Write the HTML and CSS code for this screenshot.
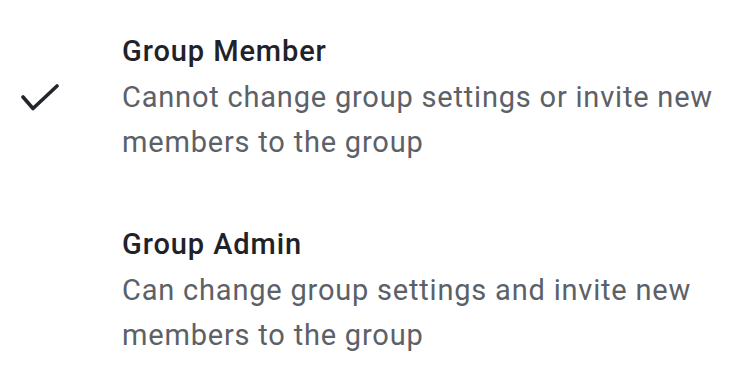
FILE: index.html
```html
<!DOCTYPE html>
<html>
<head>
<meta charset="utf-8">
<link rel="stylesheet" href="styles.css">
</head>
<body>
<div class="list">
  <div class="option">
    <div class="check">
      <svg width="40" height="30" viewBox="0 0 40 30"><path d="M3 13 L13 24.5 L37 2" fill="none" stroke="#22262b" stroke-width="3.6" stroke-linecap="round" stroke-linejoin="round"/></svg>
    </div>
    <div class="text">
      <div class="title">Group Member</div>
      <div class="desc">Cannot change group settings or invite new members to the group</div>
    </div>
  </div>
  <div class="option">
    <div class="check"></div>
    <div class="text">
      <div class="title">Group Admin</div>
      <div class="desc">Can change group settings and invite new members to the group</div>
    </div>
  </div>
</div>
</body>
</html>
```
FILE: styles.css
```css
html, body {
  margin: 0;
  padding: 0;
  background: #ffffff;
}
body {
  font-family: Roboto, "Noto Sans", sans-serif;
}
.list {
  display: flex;
  flex-direction: column;
  gap: 56px;
  padding: 28px 0 0 0;
}
.option {
  display: flex;
  align-items: flex-start;
}
.check {
  width: 122px;
  flex: none;
  padding: 56px 0 0 20px;
  box-sizing: border-box;
}
.check svg {
  display: block;
}
.text {
  width: 615px;
}
.title {
  font-size: 29px;
  font-weight: 500;
  letter-spacing: 0.9px;
  color: #1f2329;
  line-height: 47px;
}
.desc {
  font-size: 29px;
  letter-spacing: 0.8px;
  color: #5c6168;
  line-height: 45px;
}
```
